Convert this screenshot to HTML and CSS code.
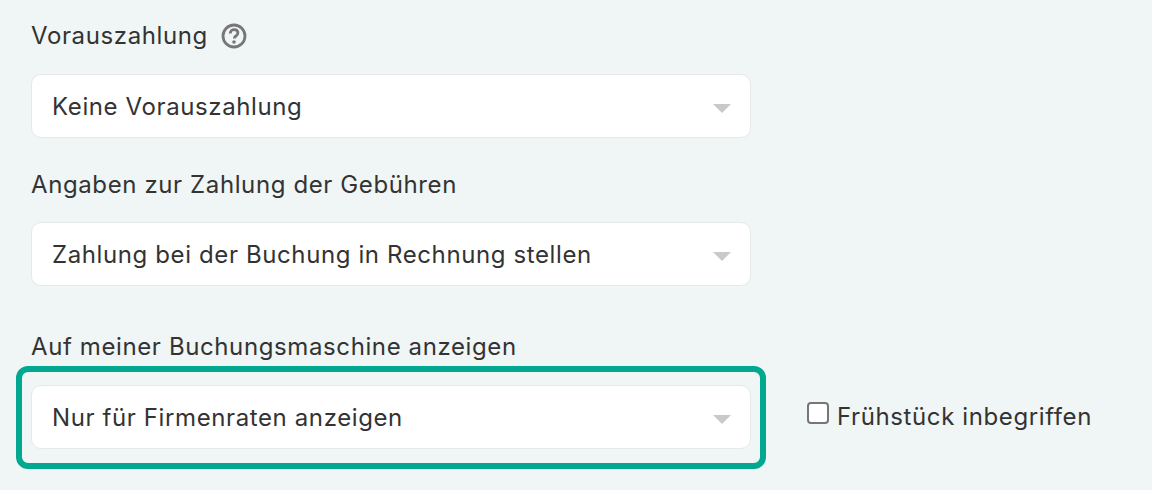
FILE: index.html
```html
<!DOCTYPE html>
<html lang="de">
<head>
<meta charset="utf-8">
<title>Vorauszahlung</title>
<link rel="stylesheet" href="styles.css">
</head>
<body>
<main class="form">
  <div class="label-row label-first">
    <span class="label">Vorauszahlung</span>
    <svg class="help" width="26" height="26" viewBox="0 0 26 26" aria-hidden="true">
      <circle cx="13" cy="13" r="11" fill="none" stroke="#777" stroke-width="2.8"/>
      <path d="M9.2 10.4c0-2.3 1.7-3.7 3.9-3.7 2.2 0 3.8 1.3 3.8 3.2 0 1.6-1 2.4-2 3.1-1 .7-1.5 1.2-1.5 2.4" fill="none" stroke="#777" stroke-width="2.8"/>
      <circle cx="13" cy="19" r="1.8" fill="#777"/>
    </svg>
  </div>
  <div class="select"><span>Keine Vorauszahlung</span><i class="caret"></i></div>
  <div class="label-row label-second"><span class="label">Angaben zur Zahlung der Gebühren</span></div>
  <div class="select select-tight"><span>Zahlung bei der Buchung in Rechnung stellen</span><i class="caret"></i></div>
  <div class="label-row label-third"><span class="label">Auf meiner Buchungsmaschine anzeigen</span></div>
  <div class="row">
    <div class="highlight">
      <div class="select"><span>Nur für Firmenraten anzeigen</span><i class="caret"></i></div>
    </div>
    <label class="check"><span class="box"></span><span>Frühstück inbegriffen</span></label>
  </div>
</main>
</body>
</html>
```
FILE: styles.css
```css
* { box-sizing: border-box; }
html, body { margin: 0; height: 490px; overflow: hidden; }
body {
  background: #f0f5f5;
  color: #333;
  font-family: Inter, "Liberation Sans", sans-serif;
  font-size: 24px;
  line-height: 32px;
  letter-spacing: 0.61px;
}
.form { padding: 20px 0 0 16px; }
.label-row { display: flex; align-items: center; margin-left: 15px; height: 32px; }
.label-second { margin-top: 31px; }
.label-third { margin-top: 45px; }
.help { margin: -1px 0 0 13px; }
.select {
  display: flex;
  align-items: center;
  justify-content: space-between;
  width: 720px;
  height: 64px;
  margin: 22px 0 0 15px;
  padding: 2px 19px 0 20px;
  background: #fff;
  border: 1px solid #e6e9e9;
  border-radius: 10px;
}
.select-tight { margin-top: 21px; }
.caret {
  width: 0;
  height: 0;
  margin-top: 3px;
  border-left: 9px solid transparent;
  border-right: 9px solid transparent;
  border-top: 9px solid #c9c9c9;
}
.row { display: flex; align-items: center; margin-top: 3px; }
.highlight {
  width: 750px;
  height: 103px;
  padding: 13px 9px 0;
  border: 6px solid #00a88f;
  border-radius: 12px;
}
.highlight .select { margin: 0; }
.check { display: flex; align-items: center; gap: 8px; margin: 0 0 2px 41px; }
.box {
  width: 22px;
  height: 22px;
  margin-top: -7px;
  background: #fff;
  border: 2px solid #767676;
  border-radius: 4px;
}
```
